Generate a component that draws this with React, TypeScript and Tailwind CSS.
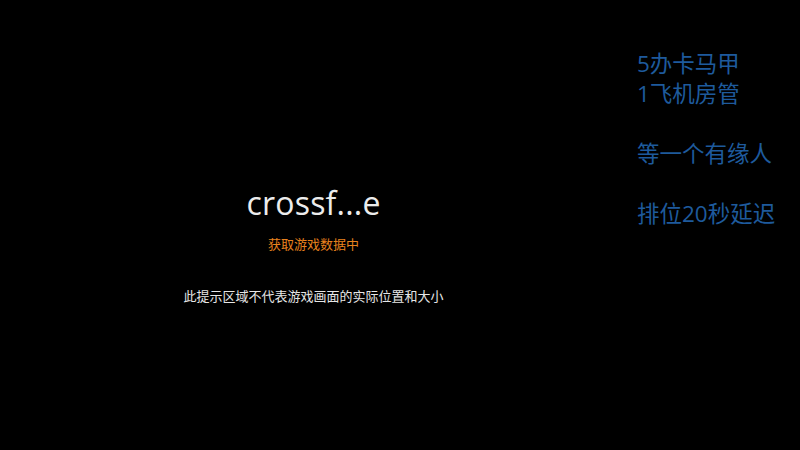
export default function App() {
  const cjk = { fontFamily: '"Open Sans", "Noto Sans CJK SC", sans-serif' };
  return (
    <div className="w-[800px] h-[450px] bg-black flex overflow-hidden" style={cjk}>
      <div className="w-[627px] flex flex-col items-center pt-[180px]">
        <div className="text-[32px] leading-[46px] text-[#ececec] tracking-[0.2px]">crossf...e</div>
        <div className="mt-[9px] text-[13px] leading-[18px] text-[#e8821e]">获取游戏数据中</div>
        <div className="mt-[34px] text-[13px] leading-[18px] text-[#e6e6e6]">此提示区域不代表游戏画面的实际位置和大小</div>
      </div>
      <div className="pt-[49px] pl-[10px] text-[22.5px] leading-[30px] text-[#1e5a9c]">
        <div>5办卡马甲</div>
        <div>1飞机房管</div>
        <div className="h-[30px]" />
        <div>等一个有缘人</div>
        <div className="h-[30px]" />
        <div>排位20秒延迟</div>
      </div>
    </div>
  );
}
